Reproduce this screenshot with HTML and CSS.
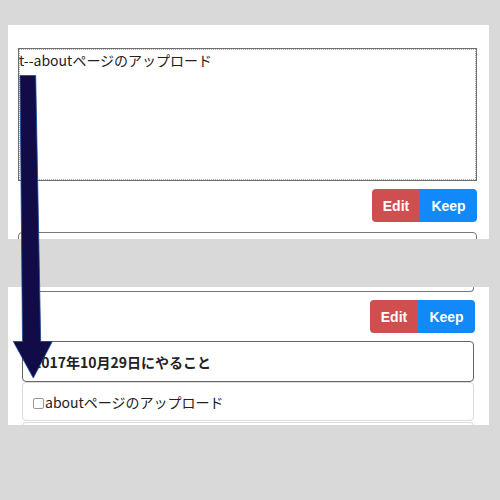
FILE: index.html
```html
<!DOCTYPE html>
<html lang="ja">
<head>
<meta charset="utf-8">
<link rel="stylesheet" href="styles.css">
</head>
<body>
<div class="panel panel-top">
  <div class="textarea">t--aboutページのアップロード</div>
  <div class="btn-row">
    <span class="btn btn-edit">Edit</span><span class="btn btn-keep">Keep</span>
  </div>
  <div class="card-stub"></div>
</div>
<div class="panel panel-bottom">
  <div class="card-end"></div>
  <div class="btn-row btn-row-2">
    <span class="btn btn-edit">Edit</span><span class="btn btn-keep">Keep</span>
  </div>
  <div class="card-header">2017年10月29日にやること</div>
  <div class="list-item"><span class="checkbox"></span>aboutページのアップロード</div>
  <div class="list-item next"></div>
</div>
<svg class="arrow" width="500" height="500" viewBox="0 0 500 500">
  <polygon points="20,75.5 35.7,75.5 40.7,341.5 52.3,341.5 33.3,378 13.3,341.5 22.5,341.5" fill="#110c48" stroke="#1c4a96" stroke-width="0.8"/>
</svg>
</body>
</html>
```
FILE: styles.css
```css
html, body {
  margin: 0;
  padding: 0;
  background: #d9d9d9;
  width: 500px;
  height: 500px;
  overflow: hidden;
  font-family: "Noto Sans CJK JP", "Liberation Sans", sans-serif;
  color: #222;
}
.panel {
  background: #fff;
  margin-left: 8px;
  width: 481px;
  overflow: hidden;
  box-sizing: border-box;
}
.panel-top {
  margin-top: 25px;
  height: 214px;
  padding: 23px 0 0 10px;
}
.textarea {
  width: 459px;
  height: 133px;
  box-sizing: border-box;
  border: 1px solid #6e6e6e;
  outline: 1px dotted #aaa;
  outline-offset: -2px;
  font-size: 14px;
  line-height: 20px;
  padding: 1px 0 0 0;
  color: #222;
}
.btn-row {
  display: flex;
  justify-content: flex-end;
  margin-top: 8px;
  padding-right: 12px;
}
.btn {
  display: flex;
  align-items: center;
  justify-content: center;
  height: 33px;
  color: #fff;
  font-family: "Liberation Sans", sans-serif;
  font-weight: bold;
  font-size: 14px;
  box-sizing: border-box;
}
.btn-edit {
  width: 48px;
  background: #cf4e50;
  border-radius: 4px 0 0 4px;
}
.btn-keep {
  width: 57px;
  background: #1289f8;
  border-radius: 0 4px 4px 0;
}
.card-stub {
  margin-top: 10px;
  width: 457px;
  height: 20px;
  border: 1px solid #777;
  border-radius: 4px 4px 0 0;
}
.panel-bottom {
  margin-top: 48px;
  height: 138px;
  padding: 0 0 0 14px;
}
.card-end {
  width: 452px;
  height: 5px;
  box-sizing: border-box;
  border: 1px solid #777;
  border-top: none;
  border-radius: 0 0 4px 4px;
}
.btn-row-2 {
  margin-top: 8px;
  padding-right: 14px;
}
.card-header {
  margin-top: 8px;
  width: 452px;
  height: 41px;
  box-sizing: border-box;
  border: 1px solid #666;
  border-radius: 4px;
  font-weight: bold;
  font-size: 14px;
  display: flex;
  align-items: center;
  padding-left: 10px;
  color: #222;
}
.list-item {
  width: 452px;
  height: 39px;
  box-sizing: border-box;
  border: 1px solid #ddd;
  border-radius: 4px;
  font-size: 14px;
  display: flex;
  align-items: center;
  padding-left: 10px;
  color: #222;
}
.list-item.next {
  margin-top: 1px;
}
.checkbox {
  width: 9px;
  height: 9px;
  border: 1px solid #999;
  border-radius: 2px;
  margin-top: 4px;
  margin-right: 1px;
  background: #fff;
}
.arrow {
  position: absolute;
  left: 0;
  top: 0;
  pointer-events: none;
}
```
